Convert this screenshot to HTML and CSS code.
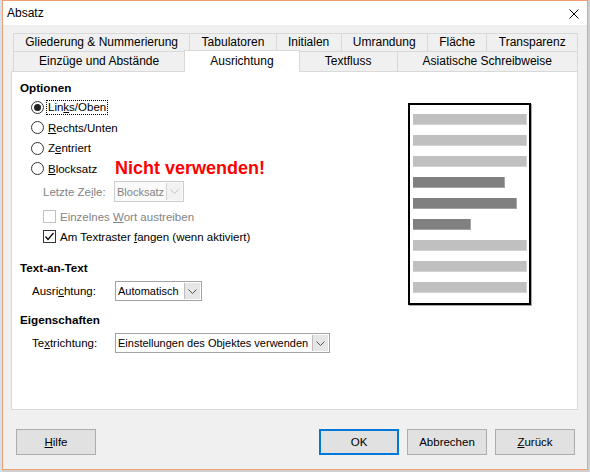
FILE: index.html
```html
<!DOCTYPE html>
<html lang="de">
<head>
<meta charset="utf-8">
<title>Absatz</title>
<link rel="stylesheet" href="styles.css">
</head>
<body>
<div class="desk"></div>
<div class="window">
  <div class="titlebar">
    <span class="title">Absatz</span>
    <svg class="close" width="10" height="10" viewBox="0 0 10 10"><path d="M0.5 0.5 L9.5 9.5 M9.5 0.5 L0.5 9.5" stroke="#000" stroke-width="1" fill="none"/></svg>
  </div>
  <div class="content">
    <div class="tabs">
      <div class="tabrow r1">
        <div class="tab">Gliederung &amp; Nummerierung</div>
        <div class="tab">Tabulatoren</div>
        <div class="tab">Initialen</div>
        <div class="tab">Umrandung</div>
        <div class="tab">Fläche</div>
        <div class="tab">Transparenz</div>
      </div>
      <div class="tabrow r2">
        <div class="tab">Einzüge und Abstände</div>
        <div class="tab sel-tab">Ausrichtung</div>
        <div class="tab">Textfluss</div>
        <div class="tab">Asiatische Schreibweise</div>
      </div>
    </div>
    <div class="panel">
      <div class="left">
        <div class="heading">Optionen</div>
        <div class="radio-row"><span class="opt"><span class="radio on"></span><span class="focus">Lin<u>k</u>s/Oben</span></span></div>
        <div class="radio-row"><span class="opt"><span class="radio"></span><span><u>R</u>echts/Unten</span></span></div>
        <div class="radio-row"><span class="opt"><span class="radio"></span><span>Z<u>e</u>ntriert</span></span></div>
        <div class="radio-row"><span class="opt"><span class="radio"></span><span><u>B</u>locksatz</span></span><span class="warn">Nicht verwenden!</span></div>
        <div class="field f-last">
          <span class="lbl lbl-indent dim">Letzte Ze<u>i</u>le:</span>
          <div class="combo dis w-block"><span class="combo-text">Blocksatz</span><span class="combo-btn"><svg width="9" height="5" viewBox="0 0 9 5"><polyline points="0.5,0.5 4.5,4.5 8.5,0.5" fill="none" stroke="#c4c4c4" stroke-width="1"/></svg></span></div>
        </div>
        <div class="check-row c1"><span class="cb dis"></span><span class="dim">Einzelnes <u>W</u>ort austreiben</span></div>
        <div class="check-row"><span class="cb"><svg width="11" height="11" viewBox="0 0 11 11"><polyline points="1.5,5.5 4,8.5 9.5,2" fill="none" stroke="#000" stroke-width="1.2"/></svg></span><span>Am Textraster <u>f</u>angen (wenn aktiviert)</span></div>

        <div class="heading h2">Text-an-Text</div>
        <div class="field f-sec">
          <span class="lbl lbl-sec">Ausri<u>c</u>htung:</span>
          <div class="combo w-auto"><span class="combo-text">Automatisch</span><span class="combo-btn"><svg width="9" height="5" viewBox="0 0 9 5"><polyline points="0.5,0.5 4.5,4.5 8.5,0.5" fill="none" stroke="#555" stroke-width="1"/></svg></span></div>
        </div>

        <div class="heading h3">Eigenschaften</div>
        <div class="field f-sec">
          <span class="lbl lbl-sec">Te<u>x</u>trichtung:</span>
          <div class="combo w-dir"><span class="combo-text">Einstellungen des Objektes verwenden</span><span class="combo-btn"><svg width="9" height="5" viewBox="0 0 9 5"><polyline points="0.5,0.5 4.5,4.5 8.5,0.5" fill="none" stroke="#555" stroke-width="1"/></svg></span></div>
        </div>
      </div>
      <div class="preview">
        <div class="bar"></div>
        <div class="bar"></div>
        <div class="bar"></div>
        <div class="bar dark b1"></div>
        <div class="bar dark b2"></div>
        <div class="bar dark b3"></div>
        <div class="bar"></div>
        <div class="bar"></div>
        <div class="bar"></div>
      </div>
    </div>
    <div class="footer">
      <div class="btn"><u>H</u>ilfe</div>
      <div class="spacer"></div>
      <div class="btn default">OK</div>
      <div class="btn">Abbrechen</div>
      <div class="btn"><u>Z</u>urück</div>
    </div>
  </div>
</div>
</body>
</html>
```
FILE: styles.css
```css
* { box-sizing: border-box; }
html, body { margin: 0; padding: 0; }
body {
  width: 590px;
  height: 472px;
  overflow: hidden;
  display: flex;
  align-items: flex-start;
  background: #cfcfcf;
  font-family: "Liberation Sans", Arial, sans-serif;
  font-size: 11.5px;
  color: #000;
}
.desk {
  width: 2px;
  height: 472px;
  background: #d3e2f2;
  flex: none;
}
.window {
  width: 586px;
  height: 470px;
  border: 1px solid #f0a070;
  display: flex;
  flex-direction: column;
  flex: none;
}
.titlebar {
  height: 24px;
  background: #fff;
  display: flex;
  align-items: center;
  justify-content: space-between;
  padding-left: 4px;
  padding-right: 8px;
  line-height: 24px;
  font-size: 12px;
}
.close { display: block; margin-top: 1px; }
.content {
  flex: 1;
  background: #f0f0f0;
  display: flex;
  flex-direction: column;
}
.tabs {
  margin-top: 8px;
  margin-left: 10px;
  width: 564px;
  position: relative;
  z-index: 1;
}
.tabrow { display: flex; }
.tab {
  flex: 1 1 auto;
  text-align: center;
  white-space: nowrap;
  border: 1px solid #d9d9d9;
  border-bottom: none;
  margin-right: -1px;
  background: #f0f0f0;
  font-size: 12px;
}
.r1 .tab { height: 18px; line-height: 17px; }
.r2 { height: 21px; margin-bottom: -1px; align-items: flex-start; }
.r2 .tab { height: 21px; line-height: 19px; border-bottom: 1px solid #d9d9d9; }
.r2 .sel-tab {
  height: 22px;
  margin-top: -1px;
  border-bottom: none;
  background: #fff;
  line-height: 20px;
}
.panel {
  margin-left: 8px;
  width: 567px;
  height: 339px;
  background: #fff;
  border: 1px solid #d9d9d9;
  display: flex;
  padding: 8px 0 0 8px;
}
.left { width: 388px; display: flex; flex-direction: column; }
.heading { font-weight: bold; line-height: 16px; height: 16px; font-size: 11.7px; }
.h2 { margin-top: 13.5px; }
.h3 { margin-top: 11px; }
.radio-row {
  height: 20.5px;
  display: flex;
  align-items: center;
  padding-left: 11px;
}
.heading + .radio-row { margin-top: 1px; }
.opt { width: 84px; display: flex; align-items: center; white-space: nowrap; }
.radio {
  width: 13px;
  height: 13px;
  border: 1px solid #333;
  border-radius: 50%;
  background: #fff;
  margin-right: 4px;
  flex: none;
  display: flex;
  align-items: center;
  justify-content: center;
}
.radio.on::after {
  content: "";
  width: 7px;
  height: 7px;
  border-radius: 50%;
  background: #222;
}
.focus {
  border: 1px dotted #000;
  padding: 0 1px;
  margin-left: -2px;
  line-height: 13px;
}
.warn {
  color: #ff0000;
  font-weight: bold;
  font-size: 18px;
  line-height: 20px;
  margin-top: -1px;
  white-space: nowrap;
}
.field {
  display: grid;
  grid-template-columns: 95px auto;
  align-items: center;
  white-space: nowrap;
}
.f-last { height: 21px; margin-top: 2px; }
.f-sec { height: 20px; margin-top: 5px; }
.lbl-indent { padding-left: 23px; }
.lbl-sec { padding-left: 12px; }
.dim { color: #838383; }
.combo {
  display: flex;
  height: 100%;
  border: 1px solid #a3a3a3;
  background: #fff;
  align-items: stretch;
}
.w-block { width: 70px; margin-left: -1px; }
.w-auto { width: 87px; }
.w-dir { width: 215px; }
.combo-text {
  flex: 1;
  padding-left: 2px;
  display: flex;
  align-items: center;
  white-space: nowrap;
  overflow: hidden;
  font-size: 11px;
}
.combo-btn {
  width: 16px;
  background: #e6e6e6;
  border-left: 1px solid #bdbdbd;
  display: flex;
  align-items: center;
  justify-content: center;
  margin: 1px 1px 1px 0;
}
.combo-btn svg { display: block; }
.combo.dis { border-color: #cccccc; color: #838383; background: #fafafa; }
.combo.dis .combo-btn { background: #f2f2f2; border-left-color: #d6d6d6; }
.check-row {
  height: 20px;
  display: flex;
  align-items: center;
  padding-left: 23px;
  white-space: nowrap;
}
.c1 { margin-top: 4.5px; }
.cb {
  width: 13px;
  height: 13px;
  border: 1px solid #333;
  background: #fff;
  margin-right: 4px;
  flex: none;
  display: flex;
  align-items: center;
  justify-content: center;
}
.cb svg { display: block; }
.cb.dis { border-color: #c2c2c2; }
.preview {
  margin-top: 23px;
  width: 123px;
  height: 202px;
  border: 2px solid #000;
  box-shadow: 1px 1px 0 #a8a8a8;
  padding: 9px 2px 0 3px;
  display: flex;
  flex-direction: column;
  gap: 10px;
}
.bar {
  height: 11px;
  background: #c0c0c0;
  border-right: 1px solid #d2d2d2;
  border-bottom: 1px solid #d2d2d2;
  width: 114px;
}
.bar.dark { background: #808080; border-color: #a6a6a6; }
.b1 { width: 92px; }
.b2 { width: 104px; }
.b3 { width: 58px; }
.footer {
  display: flex;
  margin-top: 19px;
  padding-left: 13px;
  padding-right: 12px;
  gap: 8px;
}
.spacer { flex: 1; }
.btn {
  width: 80px;
  height: 26px;
  background: #e1e1e1;
  border: 1px solid #adadad;
  display: flex;
  align-items: center;
  justify-content: center;
}
.btn.default { border: 2px solid #0078d7; }
```
